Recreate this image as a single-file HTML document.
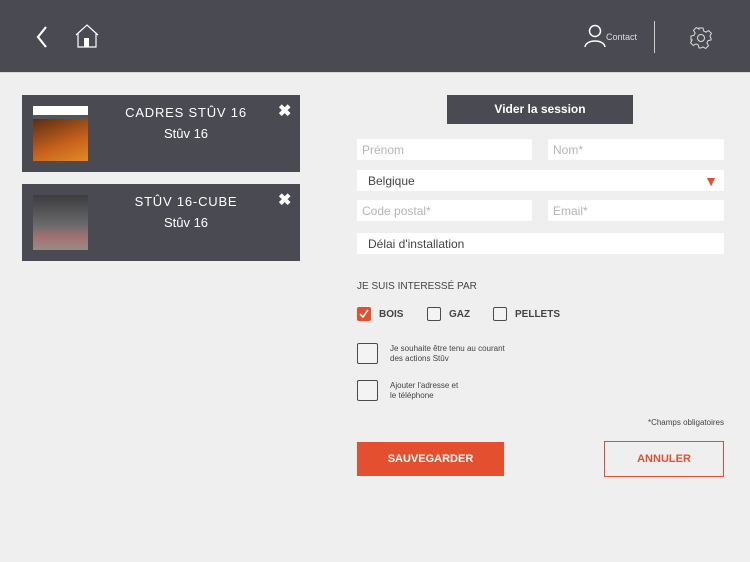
<!DOCTYPE html>
<html><head><meta charset="utf-8"><style>
*{margin:0;padding:0;box-sizing:border-box}
body{width:750px;height:562px;background:#efefef;font-family:"Liberation Sans",sans-serif;position:relative;overflow:hidden}
.a{position:absolute}
.hdr{left:0;top:0;width:750px;height:73px;background:#4a4a52;border-bottom:1px solid #d8d8d8}
.card{left:22px;width:278px;height:77px;background:#4a4a52}
.card .t{position:absolute;left:50px;right:0;text-align:center;color:#fff}
.in{background:#fff;height:21px;font-size:12px;color:#b5b5b5;padding:4px 0 0 5px}
.cb{width:14px;height:14px;border:1.5px solid #4a4a52;border-radius:2px;background:#f3f3f3}
.lbl{font-size:10px;font-weight:bold;color:#444}
</style></head><body>
<div class="a hdr">
<svg class="a" style="left:34px;top:25px" width="16" height="24" viewBox="0 0 16 24"><path d="M12 2 L4 12 L12 22" stroke="#fff" stroke-width="2.2" fill="none"/></svg>
<svg class="a" style="left:74px;top:24px" width="26" height="24" viewBox="0 0 26 24"><path d="M2 11 L13 1 L24 11 M4 9 V23 H22 V9" stroke="#fff" stroke-width="1.2" fill="none"/><rect x="10" y="14" width="5" height="9" fill="#fff"/></svg>
<svg class="a" style="left:584px;top:24px" width="22" height="24" viewBox="0 0 22 24"><circle cx="11" cy="7" r="5.5" stroke="#fff" stroke-width="1.5" fill="none"/><path d="M1 23 C2 15 20 15 21 23" stroke="#fff" stroke-width="1.5" fill="none"/></svg>
<div class="a" style="left:606px;top:32px;font-size:9px;color:#ddd">Contact</div>
<div class="a" style="left:654px;top:21px;width:1px;height:32px;background:#ccc"></div>
<svg class="a" style="left:690px;top:27px" width="22" height="22" viewBox="0 0 22 22"><path d="M9 1h4l.7 3 2.3 1.2 2.7-1.6 2.8 2.8-1.6 2.7L21 11.3v0l0 0-0 0V13l-3 .7-1.1 2.3 1.6 2.7-2.8 2.8-2.7-1.6L11 20.9 9 21l-.7-3-2.3-1.1-2.7 1.6-2.8-2.8 1.6-2.7L1 13V9l3-.7 1.1-2.3-1.6-2.7 2.8-2.8 2.7 1.6L9 1z" stroke="#ddd" stroke-width="1" fill="none"/><circle cx="11" cy="11" r="3.5" stroke="#ddd" stroke-width="1" fill="none"/></svg>
</div>

<div class="a card" style="top:95px">
<div class="a" style="left:11px;top:11px;width:55px;height:55px;background:#2a2020">
<div style="height:9px;background:#fff"></div><div style="height:4px;background:#555"></div>
<div style="height:42px;background:linear-gradient(160deg,#5a2e14,#c8621c 60%,#e08a2a)"></div></div>
<div class="t" style="top:10px;font-size:13px;letter-spacing:.8px">CADRES STÛV 16</div>
<div class="t" style="top:31px;font-size:13px">Stûv 16</div>
<div class="a" style="left:256px;top:6px;color:#fff;font-size:16px;font-weight:bold">✖</div>
</div>
<div class="a card" style="top:184px">
<div class="a" style="left:11px;top:11px;width:55px;height:55px;background:linear-gradient(180deg,#3c3c3e,#6a6a6c 55%,#a07070 75%,#9a8a86)"></div>
<div class="t" style="top:10px;font-size:13px;letter-spacing:.8px">STÛV 16-CUBE</div>
<div class="t" style="top:31px;font-size:13px">Stûv 16</div>
<div class="a" style="left:256px;top:6px;color:#fff;font-size:16px;font-weight:bold">✖</div>
</div>

<div class="a" style="left:447px;top:95px;width:186px;height:29px;background:#4a4a52;color:#fff;font-size:12px;font-weight:bold;text-align:center;line-height:29px">Vider la session</div>
<div class="a in" style="left:357px;top:139px;width:175px">Prénom</div>
<div class="a in" style="left:548px;top:139px;width:176px">Nom*</div>
<div class="a in" style="left:357px;top:170px;width:367px;color:#444;padding-left:11px">Belgique<span style="position:absolute;right:6px;top:3px;color:#e4502f;font-size:14px">▼</span></div>
<div class="a in" style="left:357px;top:200px;width:175px">Code postal*</div>
<div class="a in" style="left:548px;top:200px;width:176px">Email*</div>
<div class="a in" style="left:357px;top:233px;width:367px;color:#444;padding-left:11px">Délai d'installation</div>

<div class="a" style="left:357px;top:281px;font-size:10px;color:#444">JE SUIS INTERESSÉ PAR</div>
<div class="a cb" style="left:357px;top:307px;background:#e4502f;border-color:#e4502f"><svg width="12" height="12" viewBox="0 0 12 12" style="position:absolute;left:0;top:0"><path d="M2 6 L5 9 L10 2" stroke="#fff" stroke-width="1.5" fill="none"/></svg></div>
<div class="a lbl" style="left:379px;top:309px">BOIS</div>
<div class="a cb" style="left:427px;top:307px"></div>
<div class="a lbl" style="left:449px;top:309px">GAZ</div>
<div class="a cb" style="left:493px;top:307px"></div>
<div class="a lbl" style="left:515px;top:309px">PELLETS</div>

<div class="a cb" style="left:357px;top:343px;width:21px;height:21px"></div>
<div class="a" style="left:390px;top:344px;font-size:8px;color:#444;line-height:10px">Je souhaite être tenu au courant<br>des actions Stûv</div>
<div class="a cb" style="left:357px;top:380px;width:21px;height:21px"></div>
<div class="a" style="left:390px;top:381px;font-size:8px;color:#444;line-height:10px">Ajouter l'adresse et<br>le téléphone</div>
<div class="a" style="right:26px;top:418px;font-size:8px;color:#444">*Champs obligatoires</div>

<div class="a" style="left:357px;top:442px;width:147px;height:34px;background:#e4502f;color:#fff;font-size:11px;font-weight:bold;text-align:center;line-height:34px">SAUVEGARDER</div>
<div class="a" style="left:604px;top:441px;width:120px;height:36px;border:1.5px solid #e4502f;color:#e4502f;font-size:11px;font-weight:bold;text-align:center;line-height:34px">ANNULER</div>
</body></html>
